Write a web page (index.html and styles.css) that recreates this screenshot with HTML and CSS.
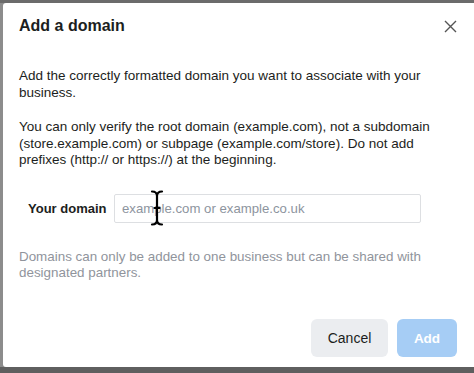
FILE: index.html
```html
<!DOCTYPE html>
<html lang="en">
<head>
  <meta charset="UTF-8">
  <meta name="viewport" content="width=device-width, initial-scale=1.0">
  <title>Add a domain</title>
  <link rel="stylesheet" href="styles.css">
</head>
<body>
  <div class="dialog">
    <div class="dialog-head">
      <h1 class="title">Add a domain</h1>
      <div class="close">
        <svg width="13" height="13" viewBox="0 0 13 13">
          <path d="M1 1 L12 12 M12 1 L1 12" stroke="#555" stroke-width="1.4" fill="none"/>
        </svg>
      </div>
    </div>

    <div class="dialog-body">
      <p class="text">Add the correctly formatted domain you want to associate with your business.</p>
      <p class="text">You can only verify the root domain (example.com), not a subdomain (store.example.com) or subpage (example.com/store). Do not add prefixes (http:// or https://) at the beginning.</p>

      <div class="field">
        <label class="field-label" for="domain">Your domain</label>
        <div class="input-wrap">
          <input id="domain" class="input" type="text" placeholder="example.com or example.co.uk">
          <!-- mouse cursor over the box -->
          <svg class="ibeam" width="14" height="36" viewBox="0 0 14 36">
            <path d="M2 1.5 Q7 1.5 7 6 Q7 1.5 12 1.5 M7 6 L7 30 M2 34.5 Q7 34.5 7 30 Q7 34.5 12 34.5 M4.5 18 L9.5 18" stroke="#000" stroke-width="2.2" fill="none" stroke-linecap="round"/>
          </svg>
        </div>
      </div>

      <p class="hint">Domains can only be added to one business but can be shared with designated partners.</p>
    </div>

    <div class="dialog-foot">
      <button class="btn btn-cancel">Cancel</button>
      <button class="btn btn-add">Add</button>
    </div>
  </div>
</body>
</html>
```

FILE: styles.css
```css
html, body {
  margin: 0;
  padding: 0;
}

body {
  font-family: "Liberation Sans", Arial, sans-serif;
  background: linear-gradient(#6b6b6b, #6b6b6b) top / 100% 3px no-repeat,
              linear-gradient(#5f5f5f, #5f5f5f) bottom / 100% 6px no-repeat,
              #8c8c8c;
  height: 373px;
  overflow: hidden;
  padding: 3px 0 0 3px;
  box-sizing: border-box;
}

.dialog {
  width: 471px;
  height: 364px;
  background: #fff;
  border-radius: 3px 0 0 3px;
  display: flex;
  flex-direction: column;
}

.dialog-head {
  display: flex;
  align-items: center;
  justify-content: space-between;
  height: 46px;
  padding: 0 17px 0 16px;
}

.title {
  margin: 0;
  font-size: 16px;
  font-weight: bold;
  color: #1c1e21;
}

.close {
  display: flex;
}

.dialog-body {
  padding: 0 24px 0 16px;
}

.text {
  margin: 19px 0 0;
  font-size: 13.5px;
  line-height: 16.5px;
  color: #1c1e21;
}

.text + .text {
  margin-top: 18px;
}

.field {
  display: flex;
  align-items: center;
  margin-top: 25px;
  padding-left: 9px;
}

.field-label {
  font-size: 13px;
  font-weight: bold;
  color: #1c1e21;
  width: 86px;
}

.input-wrap {
  position: relative;
}

.input {
  display: block;
  width: 307px;
  height: 29px;
  box-sizing: border-box;
  border: 1px solid #dddfe2;
  border-radius: 2px;
  padding: 0 7px;
  font-family: inherit;
  font-size: 13.2px;
  color: #1c1e21;
}

.input::placeholder {
  color: #8d949e;
}

.ibeam {
  position: absolute;
  left: 36px;
  top: -4px;
}

.hint {
  margin: 26px 0 0;
  font-size: 13.4px;
  line-height: 16.5px;
  color: #90949c;
}

.dialog-foot {
  margin-top: auto;
  display: flex;
  justify-content: flex-end;
  gap: 9px;
  padding: 0 17px 10px 0;
}

.btn {
  height: 38px;
  border: none;
  border-radius: 6px;
  font-family: inherit;
}

.btn-cancel {
  width: 77px;
  background: #ebedf0;
  color: #1c1e21;
  font-size: 14px;
}

.btn-add {
  width: 60px;
  background: #a6cdf5;
  color: #fff;
  font-size: 13.5px;
  font-weight: bold;
}
```
